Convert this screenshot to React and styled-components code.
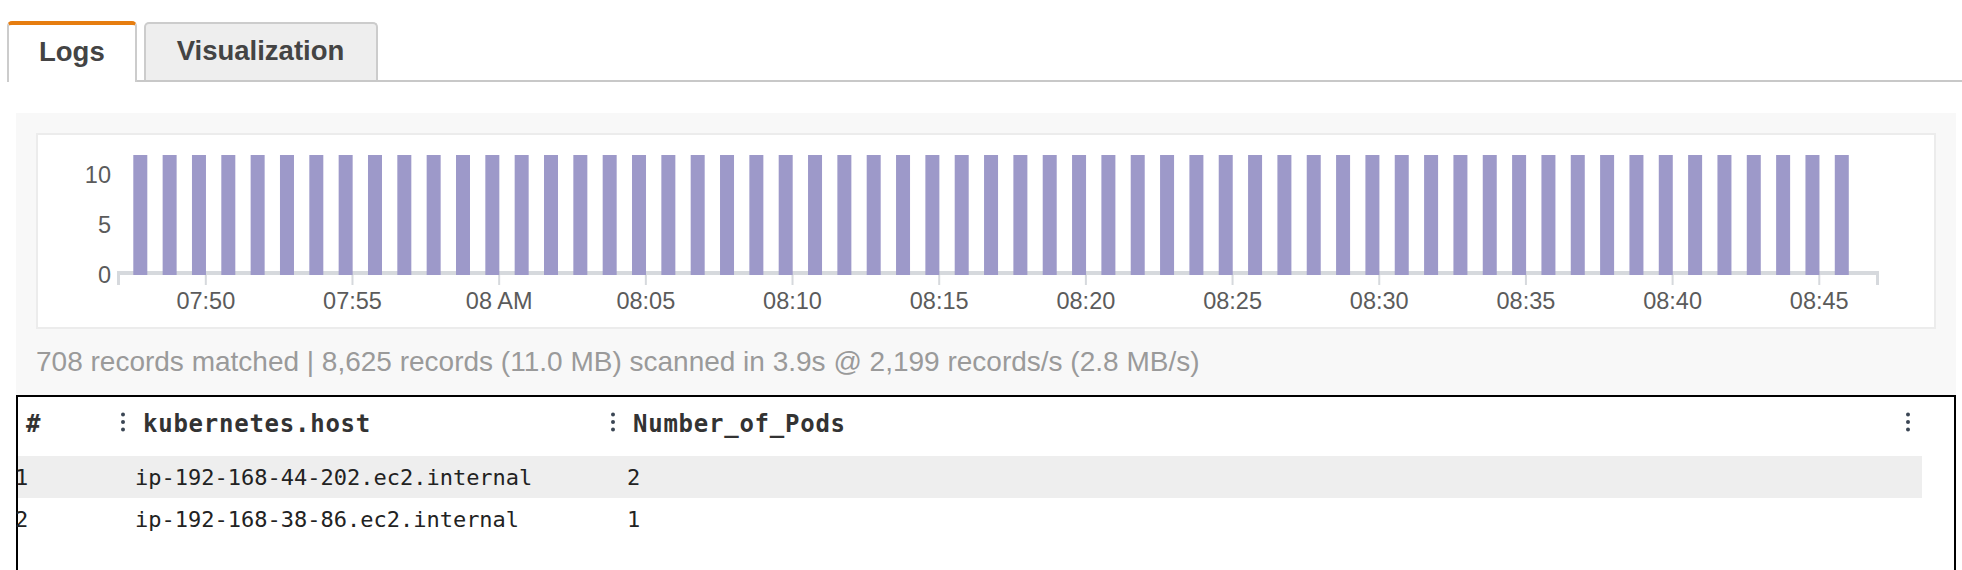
import React from 'react';
import styled, { createGlobalStyle } from 'styled-components';

const GlobalStyle = createGlobalStyle`
  html, body {
    margin: 0;
    padding: 0;
    overflow: hidden;
    background: #fff;
    font-family: "Liberation Sans", Arial, sans-serif;
  }
`;

const BAR_COUNT = 59;
const BAR_PITCH = 29.336;
const TICK_LABELS = ['07:50', '07:55', '08 AM', '08:05', '08:10', '08:15', '08:20', '08:25', '08:30', '08:35', '08:40', '08:45'];
const columns = ['#', 'kubernetes.host', 'Number_of_Pods'];
const rows = [
  { n: 1, host: 'ip-192-168-44-202.ec2.internal', pods: 2 },
  { n: 2, host: 'ip-192-168-38-86.ec2.internal', pods: 1 },
];

const Dots = () => (
  <svg width="6" height="20" viewBox="0 0 6 20">
    <circle cx="3" cy="2.5" r="2" fill="#3b4654" />
    <circle cx="3" cy="10" r="2" fill="#3b4654" />
    <circle cx="3" cy="17.5" r="2" fill="#3b4654" />
  </svg>
);

const Histogram = () => {
  const axisY = 136;
  return (
    <svg width="1896" height="192" viewBox="0 0 1896 192">
      <rect x="79" y={axisY} width="1762" height="4" fill="#d6d9dd" />
      <rect x="79" y={axisY} width="3" height="14" fill="#d6d9dd" />
      <rect x="1838" y={axisY} width="3" height="14" fill="#d6d9dd" />
      {TICK_LABELS.map((label, i) => {
        const x = 167.8 + i * BAR_PITCH * 5;
        return (
          <g key={label}>
            <rect x={x - 1} y={axisY} width="2" height="14" fill="#d6d9dd" />
            <text x={x} y="174.3" textAnchor="middle" fontSize="23.5" fill="#5b5b5b" fontFamily="Liberation Sans, Arial, sans-serif">{label}</text>
          </g>
        );
      })}
      {Array.from({ length: BAR_COUNT }).map((_, i) => (
        <rect key={i} x={95.3 + i * BAR_PITCH} y="20" width="14" height="120" fill="#9d99c9" />
      ))}
      {[['10', 48.3], ['5', 98.3], ['0', 148.3]].map(([v, y]) => (
        <text key={v} x="73" y={y} textAnchor="end" fontSize="23.5" fill="#5b5b5b" fontFamily="Liberation Sans, Arial, sans-serif">{v}</text>
      ))}
    </svg>
  );
};

export default function App() {
  return (
    <>
      <GlobalStyle />
      <Page>
        <TabBar>
          <ActiveTab>Logs</ActiveTab>
          <TabRest>
            <Tab>Visualization</Tab>
          </TabRest>
        </TabBar>
        <Panel>
          <ChartBox>
            <Histogram />
          </ChartBox>
          <Stats>708 records matched | 8,625 records (11.0 MB) scanned in 3.9s @ 2,199 records/s (2.8 MB/s)</Stats>
        </Panel>
        <Table>
          <TableInner>
            <HeaderRow>
              <HeadCell $first>#</HeadCell>
              <HeadCell>
                <Dots />
                <span>{columns[1]}</span>
              </HeadCell>
              <HeadCell $last>
                <HeadGroup>
                  <Dots />
                  <span>{columns[2]}</span>
                </HeadGroup>
                <Dots />
              </HeadCell>
            </HeaderRow>
            {rows.map((row, i) => (
              <Row key={row.n} $highlight={i === 0}>
                <NumCell>{row.n}</NumCell>
                <Cell>{row.host}</Cell>
                <Cell $last>{row.pods}</Cell>
              </Row>
            ))}
          </TableInner>
        </Table>
      </Page>
    </>
  );
}

const Page = styled.div`
  padding-top: 21px;
  width: 1962px;
  height: 570px;
  box-sizing: border-box;
`;

const TabBar = styled.div`
  display: flex;
  align-items: flex-end;
`;

const ActiveTab = styled.div`
  margin-left: 7px;
  padding: 0 30px 4px;
  line-height: 53px;
  border-top: 4px solid #e67d10;
  border-left: 2px solid #cccccc;
  border-right: 2px solid #cccccc;
  border-radius: 5px 5px 0 0;
  background: #fff;
  font-size: 27.5px;
  font-weight: 700;
  color: #444;
`;

const TabRest = styled.div`
  flex: 1;
  display: flex;
  align-items: flex-end;
  padding-left: 7px;
  border-bottom: 2px solid #c8c8c8;
`;

const Tab = styled.div`
  padding: 1px 32px 3px 31px;
  line-height: 52px;
  border: 2px solid #cccccc;
  border-bottom: none;
  border-radius: 5px 5px 0 0;
  background: #eeeeee;
  font-size: 27.5px;
  font-weight: 700;
  color: #444;
`;

const Panel = styled.div`
  margin: 31px 6px 0 16px;
  padding: 20px 20px 0;
  background: #f8f8f8;
`;

const ChartBox = styled.div`
  height: 196px;
  box-sizing: border-box;
  border: 2px solid #ececec;
  background: #fff;
  svg {
    display: block;
  }
`;

const Stats = styled.div`
  padding: 17px 0;
  line-height: 32px;
  font-size: 28px;
  color: #9a9a9a;
  white-space: nowrap;
`;

const Table = styled.div`
  margin: 0 6px 0 16px;
  height: 175px;
  box-sizing: border-box;
  border: 2px solid #000;
  border-bottom: none;
  background: #fff;
`;

const TableInner = styled.div`
  margin-right: 32px;
  font-family: "DejaVu Sans Mono", "Liberation Mono", monospace;
`;

const grid = `
  display: grid;
  grid-template-columns: 100px 490px 1fr;
`;

const HeaderRow = styled.div`
  ${grid}
  height: 59px;
  font-size: 24px;
  font-weight: 700;
  letter-spacing: 0.75px;
  color: #333;
`;

const HeadCell = styled.div`
  display: flex;
  align-items: baseline;
  justify-content: ${(p) => (p.$last ? 'space-between' : 'flex-start')};
  gap: 17px;
  padding-left: ${(p) => (p.$first ? '8px' : '2px')};
  padding-right: ${(p) => (p.$last ? '11px' : '0')};
  line-height: 55px;
  padding-bottom: 4px;
`;

const HeadGroup = styled.div`
  display: flex;
  align-items: baseline;
  gap: 17px;
`;

const Row = styled.div`
  ${grid}
  height: 42px;
  line-height: 42px;
  padding-top: 1px;
  box-sizing: border-box;
  font-size: 22px;
  color: #222;
  background: ${(p) => (p.$highlight ? '#eeeeee' : 'transparent')};
`;

const NumCell = styled.div`
  margin-left: -3px;
`;

const Cell = styled.div`
  padding-left: ${(p) => (p.$last ? '19px' : '17px')};
`;
